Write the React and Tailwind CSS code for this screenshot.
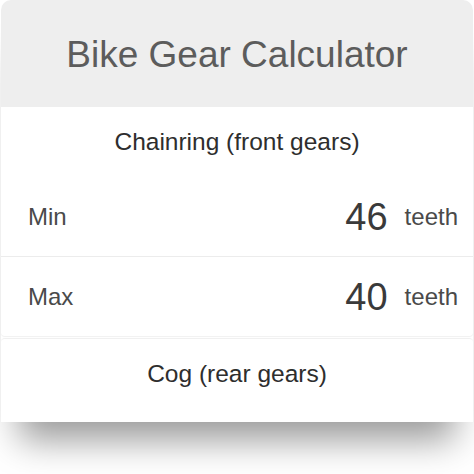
import React from 'react';

const rows = [
  { label: 'Min', value: 46 },
  { label: 'Max', value: 40 },
];

function Row({ label, value, last }) {
  return (
    <div
      className={`flex items-center h-[79px] pl-[27px] pr-[15px] ${last ? 'rounded-b-[4px] shadow-[0_1px_1px_rgba(0,0,0,0.06)]' : 'border-b border-[#ececec]'}`}
    >
      <span className="text-[24px] text-[#4a4a4a]">{label}</span>
      <span className="ml-auto text-[38px] text-[#3a3a3a] leading-none">{value}</span>
      <span className="ml-[17px] text-[24px] text-[#4a4a4a]">teeth</span>
    </div>
  );
}

export default function App() {
  return (
    <div className="w-[474px] h-[474px] bg-white pt-0 px-[1px] font-['Liberation_Sans',Arial,sans-serif]">
      <div className="bg-white rounded-t-[10px] shadow-[0_36px_34px_-18px_rgba(0,0,0,0.4)]">
        <div className="h-[107px] bg-[#eeeeee] rounded-t-[10px] flex items-center justify-center pt-[3px]">
          <h1 className="text-[37px] text-[#5c5c5c]">Bike Gear Calculator</h1>
        </div>

        <div className="h-[71px] flex items-center justify-center">
          <span className="text-[24.5px] text-[#2e2e2e]">Chainring (front gears)</span>
        </div>

        {rows.map((r, i) => (
          <Row key={r.label} {...r} last={i === rows.length - 1} />
        ))}

        <div className="h-[84px] mt-[2px] pb-[12px] flex items-center justify-center rounded-t-[4px] border-t border-[#f0f0f0]">
          <span className="text-[24.5px] text-[#2e2e2e]">Cog (rear gears)</span>
        </div>
      </div>
    </div>
  );
}
